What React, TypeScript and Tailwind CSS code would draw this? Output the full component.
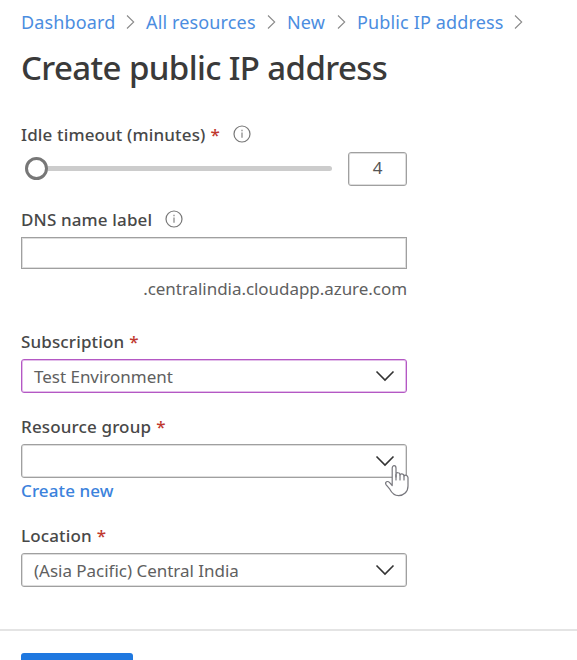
import type { ReactNode } from "react";

function Separator() {
  return (
    <svg className="-mt-px h-4 w-[9px] shrink-0" viewBox="0 0 9 16" fill="none" stroke="#8a8a8a" strokeWidth="1.1">
      <path d="M1 1.5 7.7 8 1 14.5" />
    </svg>
  );
}

function Info() {
  return (
    <svg className="-mt-0.5 h-[18px] w-[18px] shrink-0" viewBox="0 0 18 18" fill="none" stroke="#777777">
      <circle cx="9" cy="9" r="8" strokeWidth="1.2" />
      <path d="M9 7.6v5.2M9 4.8v1.4" strokeWidth="1.1" />
    </svg>
  );
}

function Chevron() {
  return (
    <svg className="h-3 w-5 shrink-0" viewBox="0 0 20 12" fill="none" stroke="#333333" strokeWidth="1.6">
      <path d="M1.5 1.5 10 10l8.5-8.5" />
    </svg>
  );
}

function Label({ children, required, info }: { children: ReactNode; required?: boolean; info?: boolean }) {
  return (
    <div className="flex h-6 items-center text-[17px] leading-6 font-medium tracking-[0.14px] text-[#484848]">
      <span>{children}</span>
      {required && <span className="ml-[5px] text-[#c0392f]">*</span>}
      {info && (
        <span className="ml-[13px] flex">
          <Info />
        </span>
      )}
    </div>
  );
}

function Select({ value, active }: { value?: string; active?: boolean }) {
  return (
    <div
      className={
        active
          ? "mt-[5px] flex h-[34px] items-center justify-between rounded-[3px] border border-[#b458c4] pr-[11px] pl-3 shadow-[inset_0_0_0_1px_#e3bfea]"
          : "mt-[5px] flex h-[34px] items-center justify-between rounded-[3px] border border-[#a0a0a0] pr-[11px] pl-3 shadow-[inset_0_0_0_1px_#dedede]"
      }
    >
      <span className="mt-px text-[17px] tracking-[-0.02px] text-[#606060]">{value}</span>
      <Chevron />
    </div>
  );
}

function HandCursor() {
  return (
    <svg
      className="absolute top-5 left-[363px] h-[34px] w-[26px]"
      viewBox="0 0 26 34"
      fill="#ffffff"
      stroke="#77777d"
      strokeWidth="1.2"
      strokeLinejoin="round"
      strokeLinecap="round"
    >
      <path d="M8.2 21.5V4.2C8.2 .8 12 .8 12 4.2V13 10.2c0-2 3.8-2 4 .2v.6c.3-1.8 3.7-1.6 4 .6v.4c.6-1.4 3.8-1 4 1.6V22c0 6-4.4 9.6-9.4 9.6-4.4 0-6.8-2.6-8.8-6.4L2 20.6c-1.4-2.8 1.6-4 3.4-2.2z" />
      <path d="M12 10.5V16M16 10.8V16M20 11.8V16" />
    </svg>
  );
}

export default function App() {
  return (
    <div className="h-[660px] w-full overflow-hidden bg-white font-['Noto_Sans',sans-serif]">
      <header className="px-[21px] pt-[10px]">
        <nav className="flex h-6 items-center text-[18px] leading-6 tracking-[0.14px] whitespace-nowrap text-[#4b8de0]">
          <a className="w-[105px]">Dashboard</a>
          <Separator />
          <a className="ml-[11px] w-[121px]">All resources</a>
          <Separator />
          <a className="ml-[11px] w-[50px]">New</a>
          <Separator />
          <a className="ml-[11px] w-[157px]">Public IP address</a>
          <Separator />
        </nav>
        <h1 className="mt-3 text-[33px] leading-[44px] font-medium tracking-[-0.62px] whitespace-nowrap text-[#3a3a3a]">
          Create public IP address
        </h1>
      </header>

      <main className="mt-[33px] ml-[21px] w-[386px]">
        <Label required info>
          Idle timeout (minutes)
        </Label>
        <div className="mt-[5px] flex h-[34px] items-center">
          <div className="mb-px ml-[4px] h-[23px] w-[23px] shrink-0 rounded-full border-3 border-[#777777] bg-white" />
          <div className="mb-px h-[5px] w-[284px] rounded-r-full bg-[#cccccc]" />
          <div className="ml-auto flex h-[34px] w-[59px] items-center justify-center rounded-[3px] border border-[#a0a0a0] pb-[2px] text-[17px] text-[#555555] shadow-[inset_0_0_0_1px_#dedede]">
            4
          </div>
        </div>

        <div className="mt-[22px]">
          <Label info>DNS name label</Label>
          <div className="mt-[5px] h-[32px] border border-[#a0a0a0] shadow-[inset_0_0_0_1px_#dedede]" />
          <div className="mt-2 text-right text-[17px] leading-6 tracking-[-0.05px] text-[#606060]">
            .centralindia.cloudapp.azure.com
          </div>
        </div>

        <div className="mt-[29px]">
          <Label required>Subscription</Label>
          <Select value="Test Environment" active />
        </div>

        <div className="mt-[22px]">
          <Label required>Resource group</Label>
          <div className="relative">
            <Select />
            <HandCursor />
          </div>
          <a className="mt-px block text-[17px] leading-6 font-medium tracking-[0.1px] text-[#3b82dc]">Create new</a>
        </div>

        <div className="mt-[21px]">
          <Label required>Location</Label>
          <Select value="(Asia Pacific) Central India" />
        </div>
      </main>

      <footer className="mt-[42px] border-t-2 border-[#e4e4e4] pt-[22px] pl-[21px]">
        <button className="block h-8 w-28 rounded-[3px] bg-[#1f78e0]" />
      </footer>
    </div>
  );
}
